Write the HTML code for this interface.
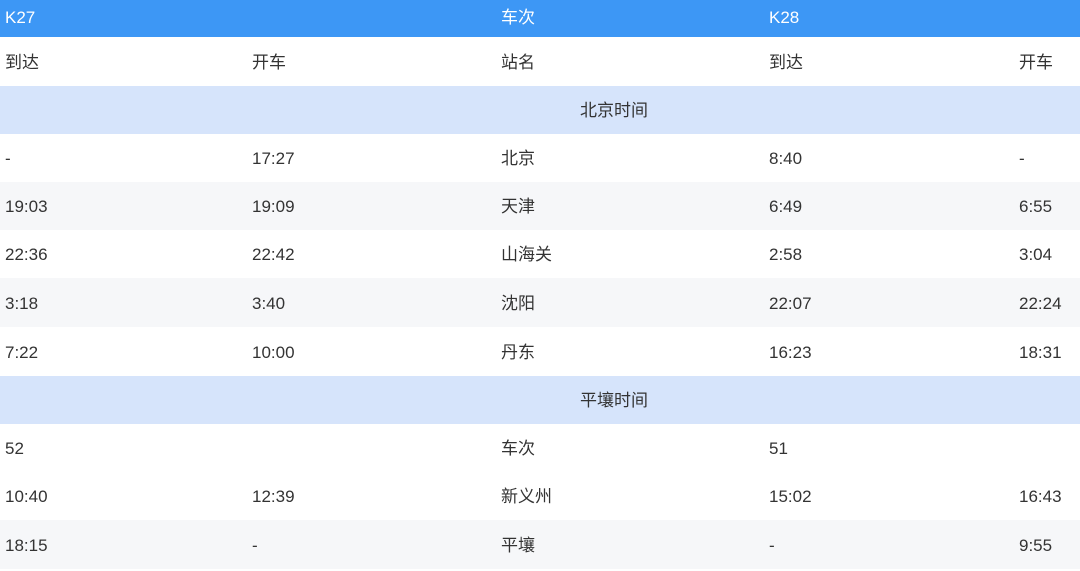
<!DOCTYPE html>
<html><head><meta charset="utf-8"><style>
body{margin:0;width:1080px;height:571px;background:#fff;font-family:"Liberation Sans","Noto Sans CJK SC",sans-serif;font-size:17px;color:#333;position:relative;overflow:hidden}
.r{position:absolute;left:0;width:1080px}
.r span{position:absolute;top:1px;white-space:nowrap;line-height:inherit}
.h span{top:0}
.a{left:5px}.b{left:252px}.c{left:501px}.d{left:769px}.e{left:1019px}
.h{background:#3d97f5;color:#fff}
.s{background:#d6e4fb}
.g{background:#f6f7f9}
.m{left:554px;width:120px;text-align:center}
</style></head><body>
<div class="r h" style="top:0;height:37px;line-height:35px"><span class="a">K27</span><span class="c">车次</span><span class="d">K28</span></div>
<div class="r" style="top:37px;height:49px;line-height:49px"><span class="a">到达</span><span class="b">开车</span><span class="c">站名</span><span class="d">到达</span><span class="e">开车</span></div>
<div class="r s" style="top:86px;height:48px;line-height:47px"><span class="m">北京时间</span></div>
<div class="r" style="top:134px;height:48px;line-height:48px"><span class="a">-</span><span class="b">17:27</span><span class="c">北京</span><span class="d">8:40</span><span class="e">-</span></div>
<div class="r g" style="top:182px;height:48px;line-height:48px"><span class="a">19:03</span><span class="b">19:09</span><span class="c">天津</span><span class="d">6:49</span><span class="e">6:55</span></div>
<div class="r" style="top:230px;height:48px;line-height:48px"><span class="a">22:36</span><span class="b">22:42</span><span class="c">山海关</span><span class="d">2:58</span><span class="e">3:04</span></div>
<div class="r g" style="top:278px;height:49px;line-height:49px"><span class="a">3:18</span><span class="b">3:40</span><span class="c">沈阳</span><span class="d">22:07</span><span class="e">22:24</span></div>
<div class="r" style="top:327px;height:49px;line-height:49px"><span class="a">7:22</span><span class="b">10:00</span><span class="c">丹东</span><span class="d">16:23</span><span class="e">18:31</span></div>
<div class="r s" style="top:376px;height:48px;line-height:47px"><span class="m">平壤时间</span></div>
<div class="r" style="top:424px;height:48px;line-height:48px"><span class="a">52</span><span class="c">车次</span><span class="d">51</span></div>
<div class="r" style="top:472px;height:48px;line-height:48px"><span class="a">10:40</span><span class="b">12:39</span><span class="c">新义州</span><span class="d">15:02</span><span class="e">16:43</span></div>
<div class="r g" style="top:520px;height:49px;line-height:49px"><span class="a">18:15</span><span class="b">-</span><span class="c">平壤</span><span class="d">-</span><span class="e">9:55</span></div>
</body></html>
